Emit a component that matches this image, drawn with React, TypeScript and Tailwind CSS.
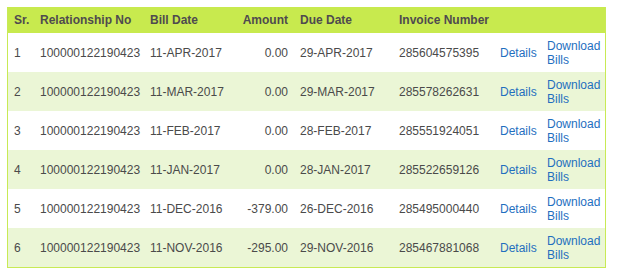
import React from "react";

const rows = [
  ["1", "100000122190423", "11-APR-2017", "0.00", "29-APR-2017", "285604575395"],
  ["2", "100000122190423", "11-MAR-2017", "0.00", "29-MAR-2017", "285578262631"],
  ["3", "100000122190423", "11-FEB-2017", "0.00", "28-FEB-2017", "285551924051"],
  ["4", "100000122190423", "11-JAN-2017", "0.00", "28-JAN-2017", "285522659126"],
  ["5", "100000122190423", "11-DEC-2016", "-379.00", "26-DEC-2016", "285495000440"],
  ["6", "100000122190423", "11-NOV-2016", "-295.00", "29-NOV-2016", "285467881068"],
];

const grid = "grid grid-cols-[26px_110px_90px_60px_99px_101px_47px_64px] items-center whitespace-nowrap";

export default function App() {
  return (
    <div className="w-[617px] h-[275px] bg-white pt-[7px] pl-[7px] font-['Liberation_Sans',Arial,sans-serif] text-[12px] leading-[14px]">
      <div className="w-[599px] border border-[#c8ea55]">
        <div className={`${grid} h-[26px] bg-[#c8ea4e] font-bold text-[#4f4a4f] -mt-px`}>
          <div className="pl-[6px]">Sr.</div>
          <div className="pl-[6px]">Relationship No</div>
          <div className="pl-[6px]">Bill Date</div>
          <div className="pr-[6px] text-right">Amount</div>
          <div className="pl-[6px]">Due Date</div>
          <div className="pl-[6px]">Invoice Number</div>
          <div />
          <div />
        </div>
        {rows.map((r, i) => (
          <div
            key={r[0]}
            className={`${grid} h-[39px] pt-[1px] text-[#4a4a4a] ${i % 2 === 1 ? "bg-[#ebf6d6]" : "bg-white"}`}
          >
            <div className="pl-[6px]">{r[0]}</div>
            <div className="pl-[6px]">{r[1]}</div>
            <div className="pl-[6px]">{r[2]}</div>
            <div className="pr-[6px] text-right">{r[3]}</div>
            <div className="pl-[6px]">{r[4]}</div>
            <div className="pl-[6px]">{r[5]}</div>
            <div className="pl-[6px] text-[#1f6fbf]">Details</div>
            <div className="pl-[6px] text-[#1f6fbf]">
              Download
              <br />
              Bills
            </div>
          </div>
        ))}
      </div>
    </div>
  );
}
